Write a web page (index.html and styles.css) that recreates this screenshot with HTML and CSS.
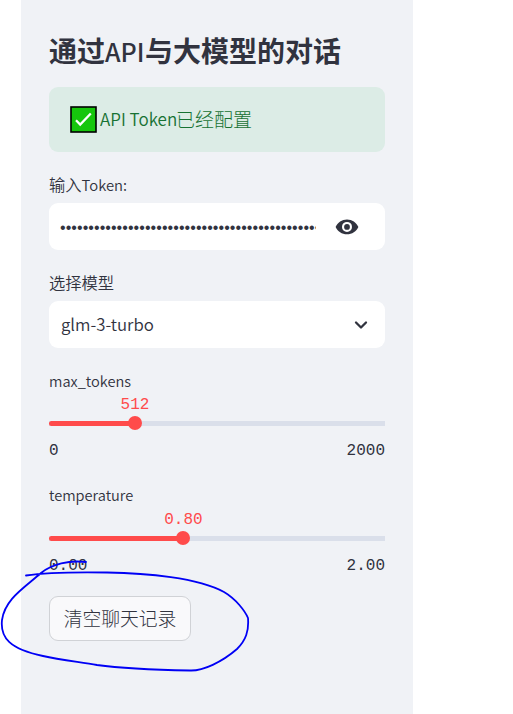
FILE: index.html
```html
<!DOCTYPE html>
<html lang="zh-CN">
<head>
<meta charset="utf-8">
<title>通过API与大模型的对话</title>
<link rel="stylesheet" href="styles.css">
</head>
<body>
<aside class="sidebar">
  <h1 class="title">通过<span class="title-latin">API</span>与大模型的对话</h1>
  <div class="alert">
    <svg class="check" viewBox="0 0 27 27"><rect x="1" y="1" width="25" height="25" fill="#16c60c" stroke="#000" stroke-width="1.6"/><path d="M6 14.2l4.2 4.3L20.8 7.5" fill="none" stroke="#fff" stroke-width="2.3"/></svg>
    <span class="alert-latin">API Token</span><span class="alert-text">已经配置</span>
  </div>
  <label class="label">输入<span class="label-latin">Token:</span></label>
  <div class="field token">
    <span class="dots">••••••••••••••••••••••••••••••••••••••••••••••</span>
    <svg class="eye" viewBox="0 0 24 16"><path fill="#31333f" fill-rule="evenodd" d="M12 .5C7 .5 2.5 3.500.6 8 2.500 12.500 7 15.300 12 15.300S21.500 12.500 23.400 8C21.500 3.500 17 .5 12 .5ZM12 12.900A5 5 0 1 1 12 2.900a5 5 0 0 1 0 10ZM12 5a2.900 2.900 0 1 0 0 5.800A2.900 2.900 0 0 0 12 5Z"/></svg>
  </div>
  <label class="label">选择模型</label>
  <div class="field select">
    <span class="model">glm-3-turbo</span>
    <svg class="chevron" viewBox="0 0 14 10"><path d="M2 2.500l5 5 5-5" fill="none" stroke="#31333f" stroke-width="2.300" stroke-linecap="round" stroke-linejoin="round"/></svg>
  </div>
  <section class="slider">
    <div class="slider-label">max_tokens</div>
    <div class="value max">512</div>
    <div class="track max"><div class="fill"></div><div class="thumb"></div></div>
    <div class="range"><span>0</span><span>2000</span></div>
  </section>
  <section class="slider">
    <div class="slider-label temp-label">temperature</div>
    <div class="value temp">0.80</div>
    <div class="track temp"><div class="fill"></div><div class="thumb"></div></div>
    <div class="range"><span>0.00</span><span>2.00</span></div>
  </section>
  <button class="clear">清空聊天记录</button>
</aside>
<svg class="annotation" viewBox="0 0 513 714"><path d="M86 562C69 560 52 564 41 573C24 588 5 599 2 620C0 638 10 649 43 656C60 660 80 662 97 665C125 669 160 670 190 670.500C203 671 222 662 237 649C246 640 249 631 248 618C245 611 236 599 224 592C198 578 147 573 107 572.500C75 572 42 573 26 575.500" fill="none" stroke="#0000f5" stroke-width="1.800" stroke-linecap="round"/></svg>
</body>
</html>
```
FILE: styles.css
```css
* { box-sizing: border-box; }
body {
  margin: 0;
  width: 513px;
  height: 714px;
  overflow: hidden;
  background: #fff;
  color: #31333f;
  font-family: "Noto Sans CJK SC", sans-serif;
}
svg { display: block; flex: none; }
.sidebar {
  width: 392px;
  height: 714px;
  margin-left: 21px;
  padding: 30px 28px 0;
  background: #f0f2f6;
}
.title {
  display: flex;
  align-items: baseline;
  height: 57px;
  margin: 0;
  font-size: 28px;
  line-height: 40px;
  font-weight: 700;
  white-space: nowrap;
}
.title-latin { width: 40px; font-size: 25px; font-weight: 500; }
.alert {
  display: flex;
  align-items: center;
  height: 65px;
  margin-bottom: 20px;
  padding-left: 21px;
  border-radius: 9px;
  background: #dcece6;
  color: #177233;
  font-size: 19px;
  font-weight: 300;
  white-space: nowrap;
}
.check { width: 27px; height: 27px; margin: 0 3px 1px 0; }
.alert-latin { width: 76px; padding-bottom: 2px; font-size: 17px; font-weight: 350; }
.alert-text { padding-bottom: 3px; }
.label {
  display: flex;
  align-items: baseline;
  height: 31px;
  font-size: 16.3px;
  line-height: 25px;
  font-weight: 350;
}
.label-latin { font-size: 14.8px; }
.field {
  display: flex;
  align-items: center;
  height: 47px;
  margin-bottom: 20px;
  border-radius: 9px;
  background: #fff;
}
.token { padding-left: 10px; }
.dots {
  width: 257px;
  padding: 2px 0 0 1px;
  overflow: hidden;
  font-family: "Liberation Sans", sans-serif;
  font-size: 16px;
  letter-spacing: 0.06px;
  white-space: nowrap;
}
.eye { width: 24px; height: 16px; margin-left: 19px; }
.select { justify-content: space-between; margin-bottom: 21px; padding: 0 17px 0 12px; }
.model { padding-bottom: 1px; font-size: 16.8px; font-weight: 350; }
.chevron { width: 14px; height: 10px; }
.slider { height: 115px; }
.slider-label { height: 23px; font-size: 14.6px; line-height: 24px; font-weight: 350; }
.temp-label { line-height: 22px; }
.value {
  display: flex;
  justify-content: center;
  height: 24px;
  color: #ff4b4b;
  font: 16px/26px "Liberation Mono", monospace;
}
.value.max { width: 172px; }
.value.temp { width: 268.8px; }
.track {
  display: flex;
  align-items: center;
  height: 14px;
  background: linear-gradient(#dadfea, #dadfea) center / 100% 5px no-repeat;
}
.fill { height: 5px; border-radius: 3px 0 0 3px; background: #ff4b4b; }
.max .fill { width: 25.6%; }
.temp .fill { width: 40%; }
.thumb { width: 14px; height: 14px; margin-left: -7px; border-radius: 50%; background: #ff4b4b; }
.range {
  display: flex;
  justify-content: space-between;
  padding-top: 9px;
  font: 16px/25px "Liberation Mono", monospace;
}
.clear {
  display: block;
  width: 142px;
  height: 45px;
  margin-top: -3px;
  padding: 0 0 3px;
  border: 1px solid #d0d2d6;
  border-radius: 9px;
  background: #f9f9fb;
  color: #31333f;
  font: 300 18.8px/39px "Noto Sans CJK SC", sans-serif;
}
.annotation { position: absolute; inset: 0; width: 513px; height: 714px; pointer-events: none; }
```
